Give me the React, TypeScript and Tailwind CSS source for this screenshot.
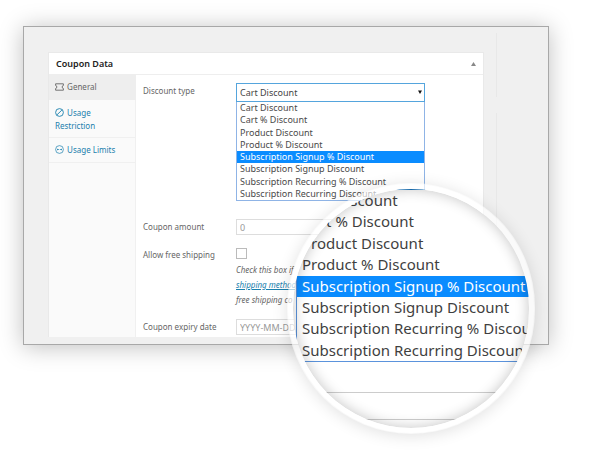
import { useState } from "react";

const discountTypes = [
  "Cart Discount",
  "Cart % Discount",
  "Product Discount",
  "Product % Discount",
  "Subscription Signup % Discount",
  "Subscription Signup Discount",
  "Subscription Recurring % Discount",
  "Subscription Recurring Discount",
];

const activeType = "Subscription Signup % Discount";

function TicketIcon() {
  return (
    <svg className="inline-block align-[-1px] w-[9px] h-[8px]" viewBox="0 0 9 8" fill="none" stroke="currentColor" strokeWidth="0.9">
      <path d="M0.6 0.8h7.8v1.7L7.3 3.1v1.8l1.1 0.6v1.7H0.6V5.5l1.1-0.6V3.1L0.6 2.5z" />
    </svg>
  );
}

function BlockIcon() {
  return (
    <svg className="inline-block align-[-1px] w-[9px] h-[9px]" viewBox="0 0 9 9" fill="none" stroke="currentColor" strokeWidth="0.9">
      <circle cx="4.5" cy="4.5" r="3.9" />
      <path d="M2 6.8 6.9 2.1" />
    </svg>
  );
}

function LimitsIcon() {
  return (
    <svg className="inline-block align-[-1px] w-[9px] h-[9px]" viewBox="0 0 9 9" fill="none" stroke="currentColor" strokeWidth="0.7">
      <circle cx="4.5" cy="4.5" r="3.9" />
      <path d="M2.1 4.5h2M4.9 4.5h2M3 3.8l-0.8 0.7 0.8 0.7M6 3.8l0.8 0.7-0.8 0.7" />
    </svg>
  );
}

function Tabs() {
  return (
    <nav className="w-[87px] shrink-0 bg-[#fafafa] border-r border-[#f0f0f0] text-[8px] leading-[13px] text-[#1a80ad]">
      <a href="#general" className="block px-1.5 pt-[5px] pb-[7px] bg-[#eeeeee] text-[#666] -mr-px">
        <TicketIcon /> <span className="ml-px">General</span>
      </a>
      <a href="#restriction" className="block px-1.5 pt-[6px] pb-[5px] border-b border-[#f0f0f0]">
        <BlockIcon /> <span className="ml-px">Usage<br />Restriction</span>
      </a>
      <a href="#limits" className="block px-1.5 pt-[5px] pb-[6px] border-b border-[#f0f0f0]">
        <LimitsIcon /> <span className="ml-px">Usage Limits</span>
      </a>
    </nav>
  );
}

function CouponForm() {
  const [tipo, setTipo] = useState("Cart Discount");
  const [amount, setAmount] = useState("");
  const [expiry, setExpiry] = useState("");
  const [freeShipping, setFreeShipping] = useState(false);

  return (
    <form className="flex-1 min-w-0 pl-[7px] pt-2 pb-[2px] text-[8px] text-[#666]">
      {/* Discount type with its open list */}
      <div className="flex h-[136px]">
        <label htmlFor="tipo" className="w-[93px] shrink-0 leading-[16px]">Discount type</label>
        <div className="w-[189px]">
          <div className="relative">
            <select
              id="tipo"
              value={tipo}
              onChange={(e) => setTipo(e.target.value)}
              className="block w-full h-[19px] appearance-none border border-[#55a5dd] bg-white pl-[3px] text-[9px] text-[#444] outline-none"
            >
              {discountTypes.map((t) => (
                <option key={t}>{t}</option>
              ))}
            </select>
            <svg className="absolute right-[3px] top-[7px] w-[4px] h-[4px] pointer-events-none" viewBox="0 0 4 4">
              <path d="M0 0.5h4L2 4z" fill="#111" />
            </svg>
          </div>
          <ul className="grid grid-rows-8 h-[99px] border border-t-0 border-[#8fb4e6] bg-white text-[9px] leading-[12px] text-[#4a4a4a]">
            {discountTypes.map((t) => (
              <li key={t} className={`pl-[3px] whitespace-nowrap ${t === activeType ? "bg-[#0a8cff] text-white" : ""}`}>{t}</li>
            ))}
          </ul>
        </div>
      </div>

      <div className="flex h-[29px]">
        <label htmlFor="amount" className="w-[93px] shrink-0 leading-[15px]">Coupon amount</label>
        <input
          id="amount"
          placeholder="0"
          value={amount}
          onChange={(e) => setAmount(e.target.value)}
          className="w-[189px] h-[16px] border border-[#ddd] bg-white px-[3px] text-[9px] placeholder:text-[#999] outline-none"
        />
      </div>

      <div className="flex h-[71px]">
        <label htmlFor="shipping" className="w-[93px] shrink-0 leading-[13px]">Allow free shipping</label>
        <div className="w-[189px]">
          <input
            id="shipping"
            type="checkbox"
            checked={freeShipping}
            onChange={(e) => setFreeShipping(e.target.checked)}
            className="block w-[11px] h-[11px] appearance-none border border-[#bbb] bg-white checked:bg-[#1a80ad]"
          />
          <p className="mt-[3px] italic leading-[15px]">
            Check this box if<br />
            <a href="#shipping" className="text-[#1a80ad] underline">shipping method</a><br />
            free shipping co
          </p>
        </div>
      </div>

      <div className="flex">
        <label htmlFor="expiry" className="w-[93px] shrink-0 leading-[15px]">Coupon expiry date</label>
        <input
          id="expiry"
          placeholder="YYYY-MM-DD"
          value={expiry}
          onChange={(e) => setExpiry(e.target.value)}
          className="w-[189px] h-[16px] border border-[#ddd] bg-white px-[3px] text-[9px] placeholder:text-[#999] outline-none"
        />
      </div>
    </form>
  );
}

// Round magnifier laid over the bottom right corner of the window
function Lens() {
  return (
    <div className="absolute left-[287px] top-[183px] w-[248px] h-[251px] rounded-full border-6 border-white/65 bg-white bg-clip-padding overflow-hidden shadow-[0_2px_16px_rgba(0,0,0,0.12)]">
      <div className="border-t border-[#1c76bd]">
        <ul className="grid grid-rows-8 h-[172px] w-[320px] ml-[3px] border-l border-b border-[#5b93dc] text-[15px] leading-[21px] text-[#3f3f3f]">
          {discountTypes.map((t) => (
            <li key={t} className={`pl-[5px] whitespace-nowrap ${t === activeType ? "bg-[#0a8cff] text-white" : ""}`}>{t}</li>
          ))}
        </ul>
        <div className="mt-[30px] h-[28px] border-y border-[#ccc]" />
      </div>
      <div className="absolute inset-0 rounded-full shadow-[inset_0_0_14px_rgba(0,0,0,0.24)]" />
    </div>
  );
}

export default function App() {
  return (
    <div className="relative min-h-screen overflow-hidden bg-white pt-[26px] pl-[23px] pr-[51px] font-['Noto_Sans','Open_Sans',sans-serif]">
      <div className="flex border border-[#a8a8a8] bg-[#f0f0f0] shadow-[0_2px_22px_rgba(0,0,0,0.25)]">
        <main className="flex-1 min-w-0 pt-[25px] pb-[7px] pl-6 pr-3">
          <section className="border border-b-0 border-[#e9e9e9] bg-white">
            <header className="flex items-center justify-between h-[22px] px-[7px] border-b border-[#eee]">
              <h2 className="text-[9px] font-semibold text-[#222]">Coupon Data</h2>
              <button type="button" aria-label="Toggle panel">
                <svg className="w-[5px] h-[4px]" viewBox="0 0 5 4"><path d="M2.5 0 5 4H0z" fill="#888" /></svg>
              </button>
            </header>
            <div className="flex">
              <Tabs />
              <CouponForm />
            </div>
          </section>
        </main>
        <aside className="flex flex-col w-[52px] pt-[6px]">
          <div className="h-16 border-l border-[#e8e8e8]" />
          <div className="h-4" />
          <div className="flex-1 border-l border-[#e8e8e8]" />
        </aside>
      </div>
      <Lens />
    </div>
  );
}
